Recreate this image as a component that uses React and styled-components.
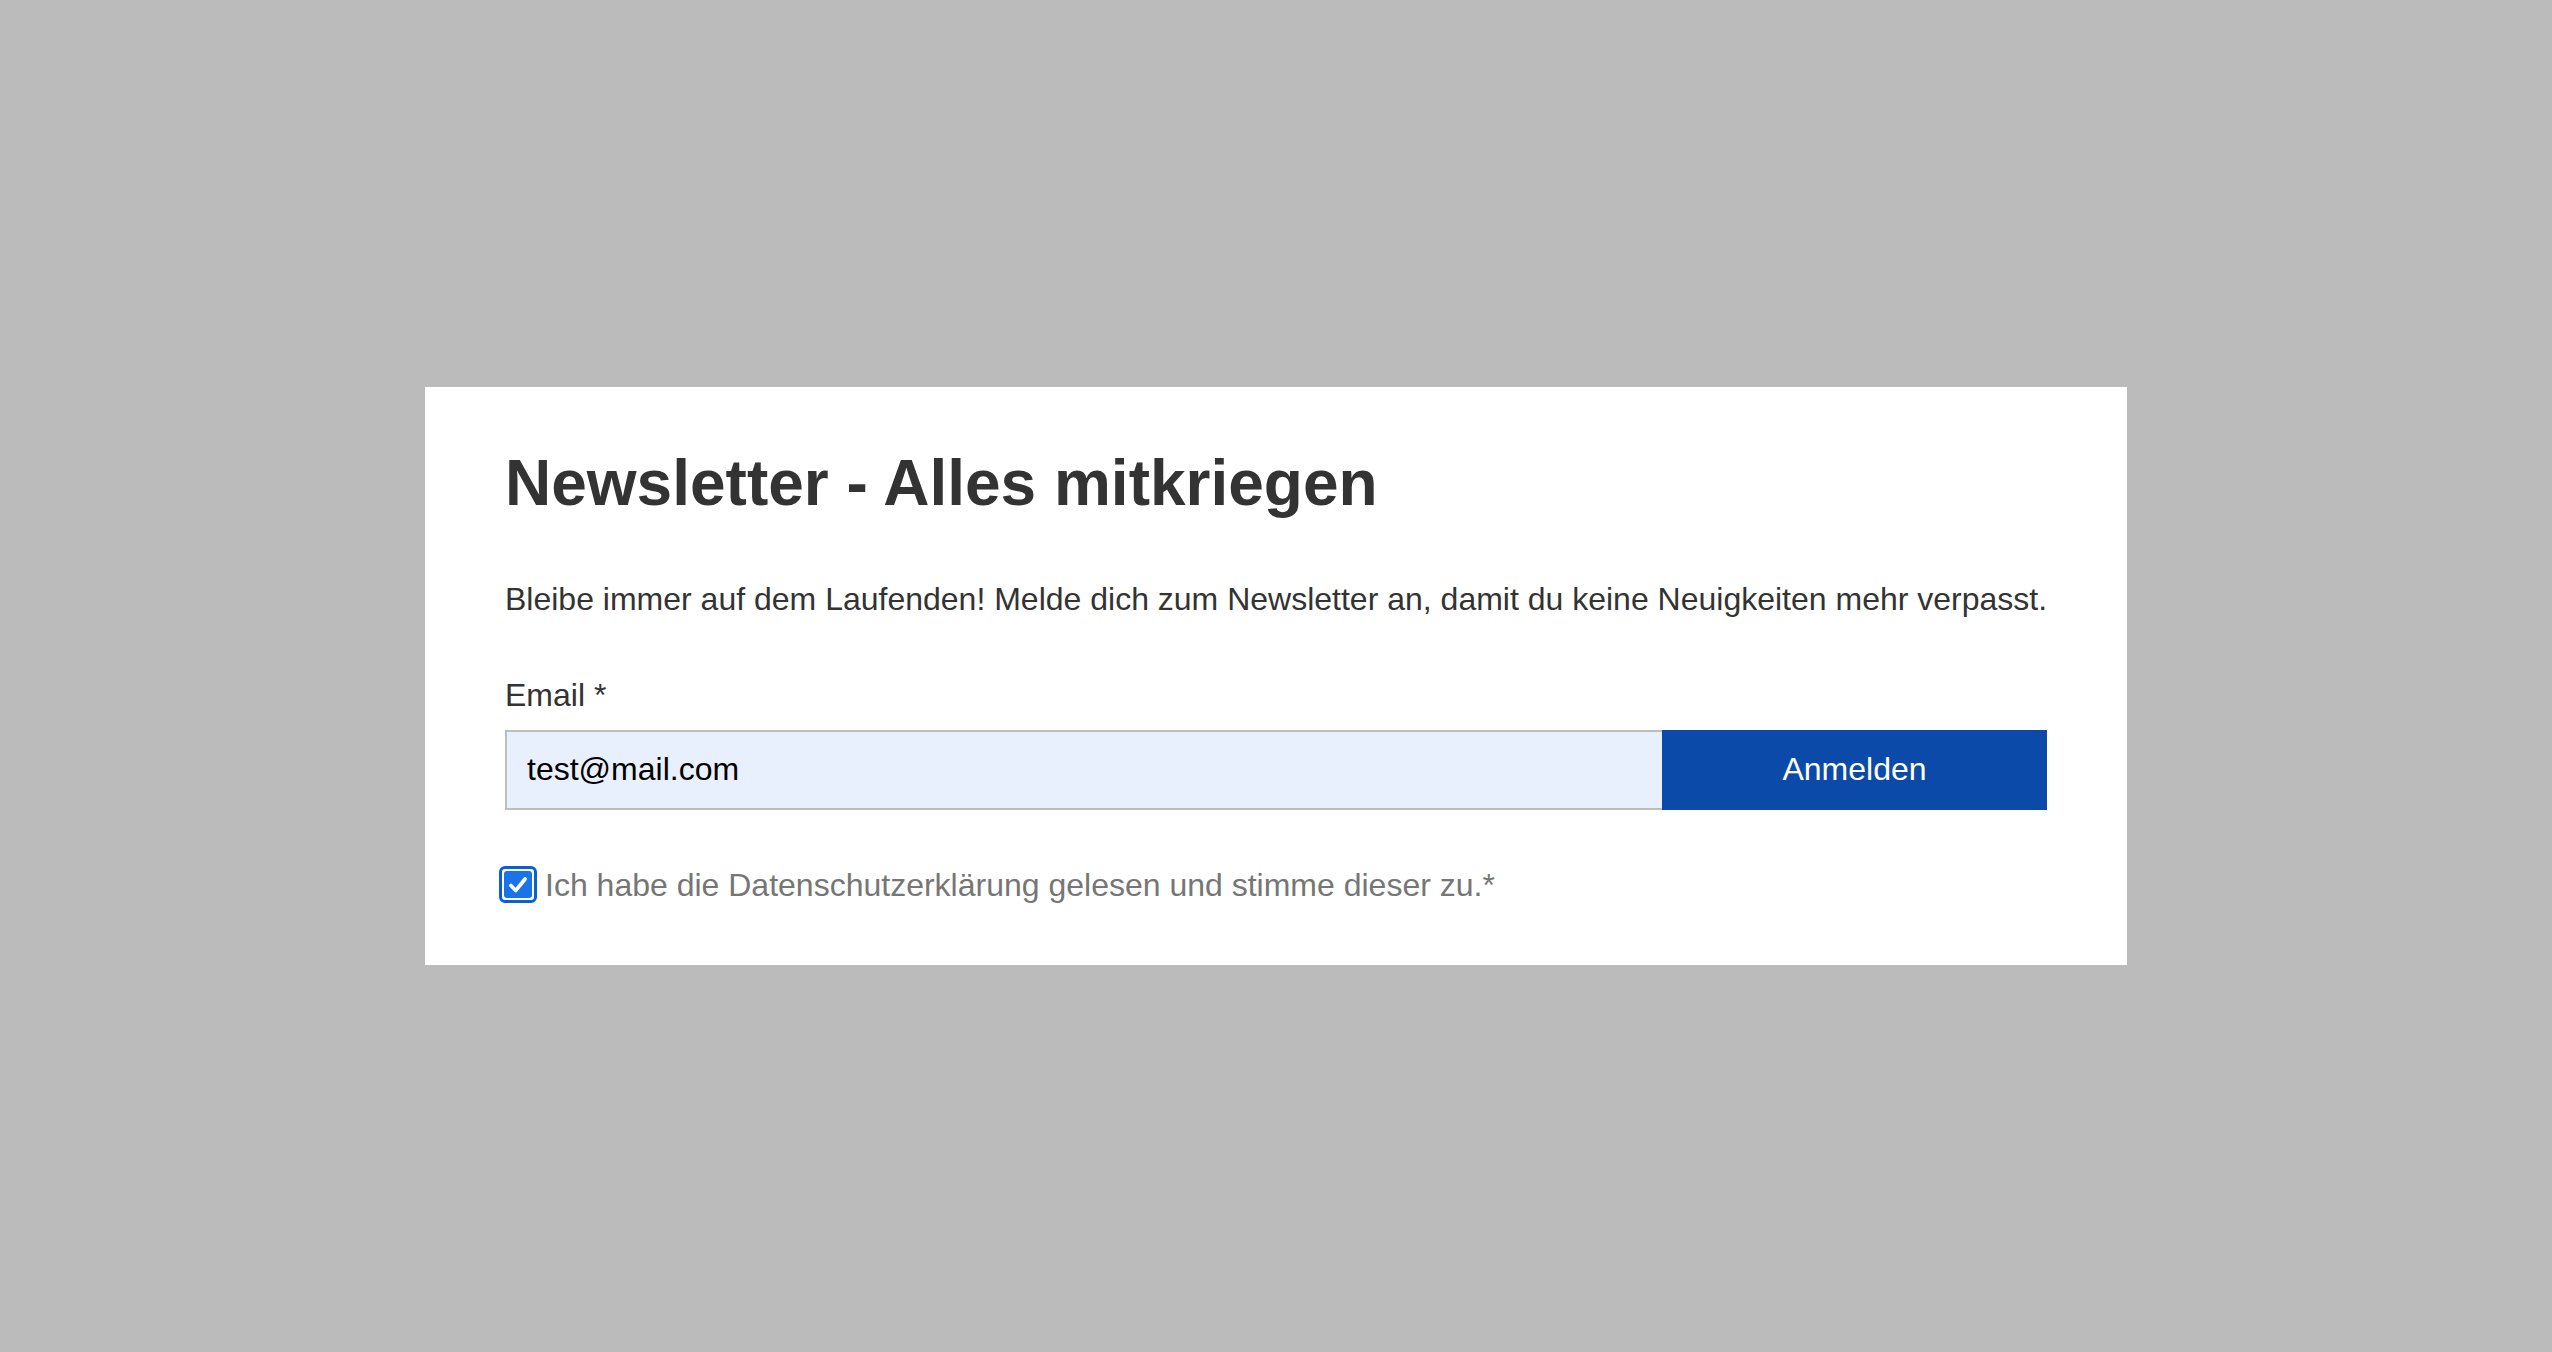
import React, { useState } from "react";
import styled, { createGlobalStyle } from "styled-components";

const GlobalStyle = createGlobalStyle`
  html, body {
    margin: 0;
    padding: 0;
    background: #bbbbbb;
    font-family: "Liberation Sans", Arial, sans-serif;
  }
  * {
    box-sizing: border-box;
  }
`;

const App = () => {
  const [email, setEmail] = useState("test@mail.com");
  const [agreed, setAgreed] = useState(true);

  return (
    <>
      <GlobalStyle />
      <Page>
        <Card>
          <Title>Newsletter - Alles mitkriegen</Title>
          <Intro>
            Bleibe immer auf dem Laufenden! Melde dich zum Newsletter an, damit
            du keine Neuigkeiten mehr verpasst.
          </Intro>

          <Form onSubmit={(e) => e.preventDefault()}>
            <FieldLabel htmlFor="newsletter-email">Email *</FieldLabel>
            <InputRow>
              <EmailInput
                id="newsletter-email"
                type="email"
                value={email}
                onChange={(e) => setEmail(e.target.value)}
              />
              <SubmitButton type="submit">Anmelden</SubmitButton>
            </InputRow>

            <ConsentRow onClick={() => setAgreed(!agreed)}>
              <CheckFrame>
                <CheckFill checked={agreed}>
                  {agreed && (
                    <svg width="24" height="24" viewBox="0 0 22 22">
                      <polyline
                        points="4.5,11.5 9,16 17.5,5.5"
                        fill="none"
                        stroke="#fff"
                        strokeWidth="3.4"
                        strokeLinecap="round"
                        strokeLinejoin="round"
                      />
                    </svg>
                  )}
                </CheckFill>
              </CheckFrame>
              <ConsentText>
                Ich habe die Datenschutzerklärung gelesen und stimme dieser zu.*
              </ConsentText>
            </ConsentRow>
          </Form>
        </Card>
      </Page>
    </>
  );
};

const Page = styled.div`
  min-height: 100vh;
  display: flex;
  align-items: center;
  justify-content: center;
`;

const Card = styled.div`
  width: 1702px;
  background: #fff;
  padding: 58px 80px 56px;
`;

const Title = styled.h1`
  margin: 0;
  font-size: 64px;
  font-weight: bold;
  line-height: 1.2;
  color: #333;
`;

const Intro = styled.p`
  margin: 53px 0 0;
  font-size: 32px;
  line-height: 1.5;
  white-space: nowrap;
  color: #333;
`;

const Form = styled.form`
  margin-top: 48px;
`;

const FieldLabel = styled.label`
  display: block;
  font-size: 32px;
  line-height: 1.5;
  color: #333;
`;

const InputRow = styled.div`
  display: flex;
  height: 80px;
  margin-top: 11px;
`;

const EmailInput = styled.input`
  flex: 1;
  min-width: 0;
  height: 100%;
  border: 2px solid #bdbdbd;
  border-right: none;
  background: #e8f0fe;
  padding: 0 20px;
  font-family: "Liberation Sans", Arial, sans-serif;
  font-size: 32px;
  color: #000;
  outline: none;
`;

const SubmitButton = styled.button`
  width: 385px;
  height: 100%;
  border: none;
  background: #0b4aa8;
  color: #fff;
  font-family: "Liberation Sans", Arial, sans-serif;
  font-size: 32px;
  cursor: pointer;
`;

const ConsentRow = styled.div`
  display: flex;
  align-items: center;
  gap: 8px;
  margin-top: 51px;
  cursor: pointer;
`;

const CheckFrame = styled.span`
  display: inline-flex;
  width: 38px;
  height: 37px;
  margin-left: -6px;
  padding: 2px;
  border: 3px solid #0b5fd6;
  border-radius: 6px;
  background: #fff;
`;

const CheckFill = styled.span`
  flex: 1;
  display: flex;
  align-items: center;
  justify-content: center;
  border-radius: 3px;
  background: ${(p) => (p.checked ? "#1a74e9" : "#fff")};
  border: ${(p) => (p.checked ? "none" : "2px solid #767676")};
`;

const ConsentText = styled.span`
  font-size: 32px;
  line-height: 1.5;
  color: #767676;
`;

export default App;
